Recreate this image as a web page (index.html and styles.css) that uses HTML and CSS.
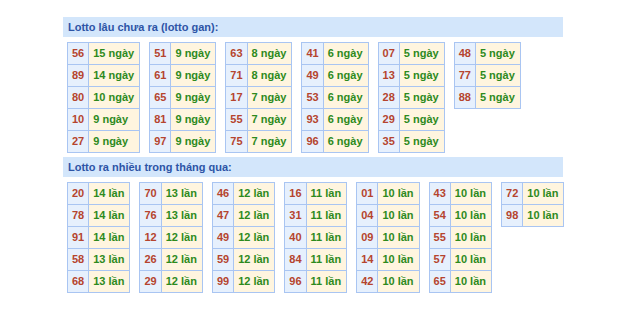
FILE: index.html
```html
<!DOCTYPE html>
<html lang="vi">
<head>
<meta charset="utf-8">
<link rel="stylesheet" href="styles.css">
</head>
<body>
<div class="wrap">
  <div class="title">Lotto lâu chưa ra (lotto gan):</div>
  <div class="group">
    <table class="lt"><tr><td class="n">56</td><td class="d">15 ngày</td></tr><tr><td class="n">89</td><td class="d">14 ngày</td></tr><tr><td class="n">80</td><td class="d">10 ngày</td></tr><tr><td class="n">10</td><td class="d">9 ngày</td></tr><tr><td class="n">27</td><td class="d">9 ngày</td></tr></table>
    <table class="lt"><tr><td class="n">51</td><td class="d">9 ngày</td></tr><tr><td class="n">61</td><td class="d">9 ngày</td></tr><tr><td class="n">65</td><td class="d">9 ngày</td></tr><tr><td class="n">81</td><td class="d">9 ngày</td></tr><tr><td class="n">97</td><td class="d">9 ngày</td></tr></table>
    <table class="lt"><tr><td class="n">63</td><td class="d">8 ngày</td></tr><tr><td class="n">71</td><td class="d">8 ngày</td></tr><tr><td class="n">17</td><td class="d">7 ngày</td></tr><tr><td class="n">55</td><td class="d">7 ngày</td></tr><tr><td class="n">75</td><td class="d">7 ngày</td></tr></table>
    <table class="lt"><tr><td class="n">41</td><td class="d">6 ngày</td></tr><tr><td class="n">49</td><td class="d">6 ngày</td></tr><tr><td class="n">53</td><td class="d">6 ngày</td></tr><tr><td class="n">93</td><td class="d">6 ngày</td></tr><tr><td class="n">96</td><td class="d">6 ngày</td></tr></table>
    <table class="lt"><tr><td class="n">07</td><td class="d">5 ngày</td></tr><tr><td class="n">13</td><td class="d">5 ngày</td></tr><tr><td class="n">28</td><td class="d">5 ngày</td></tr><tr><td class="n">29</td><td class="d">5 ngày</td></tr><tr><td class="n">35</td><td class="d">5 ngày</td></tr></table>
    <table class="lt"><tr><td class="n">48</td><td class="d">5 ngày</td></tr><tr><td class="n">77</td><td class="d">5 ngày</td></tr><tr><td class="n">88</td><td class="d">5 ngày</td></tr></table>
  </div>
  <div class="title">Lotto ra nhiều trong tháng qua:</div>
  <div class="group">
    <table class="lt"><tr><td class="n">20</td><td class="d">14 lần</td></tr><tr><td class="n">78</td><td class="d">14 lần</td></tr><tr><td class="n">91</td><td class="d">14 lần</td></tr><tr><td class="n">58</td><td class="d">13 lần</td></tr><tr><td class="n">68</td><td class="d">13 lần</td></tr></table>
    <table class="lt"><tr><td class="n">70</td><td class="d">13 lần</td></tr><tr><td class="n">76</td><td class="d">13 lần</td></tr><tr><td class="n">12</td><td class="d">12 lần</td></tr><tr><td class="n">26</td><td class="d">12 lần</td></tr><tr><td class="n">29</td><td class="d">12 lần</td></tr></table>
    <table class="lt"><tr><td class="n">46</td><td class="d">12 lần</td></tr><tr><td class="n">47</td><td class="d">12 lần</td></tr><tr><td class="n">49</td><td class="d">12 lần</td></tr><tr><td class="n">59</td><td class="d">12 lần</td></tr><tr><td class="n">99</td><td class="d">12 lần</td></tr></table>
    <table class="lt"><tr><td class="n">16</td><td class="d">11 lần</td></tr><tr><td class="n">31</td><td class="d">11 lần</td></tr><tr><td class="n">40</td><td class="d">11 lần</td></tr><tr><td class="n">84</td><td class="d">11 lần</td></tr><tr><td class="n">96</td><td class="d">11 lần</td></tr></table>
    <table class="lt"><tr><td class="n">01</td><td class="d">10 lần</td></tr><tr><td class="n">04</td><td class="d">10 lần</td></tr><tr><td class="n">09</td><td class="d">10 lần</td></tr><tr><td class="n">14</td><td class="d">10 lần</td></tr><tr><td class="n">42</td><td class="d">10 lần</td></tr></table>
    <table class="lt"><tr><td class="n">43</td><td class="d">10 lần</td></tr><tr><td class="n">54</td><td class="d">10 lần</td></tr><tr><td class="n">55</td><td class="d">10 lần</td></tr><tr><td class="n">57</td><td class="d">10 lần</td></tr><tr><td class="n">65</td><td class="d">10 lần</td></tr></table>
    <table class="lt"><tr><td class="n">72</td><td class="d">10 lần</td></tr><tr><td class="n">98</td><td class="d">10 lần</td></tr></table>
  </div>
</div>
</body>
</html>
```

FILE: styles.css
```css
html, body {
  margin: 0;
  padding: 0;
  background: #ffffff;
}
body {
  font-family: "Liberation Sans", Arial, sans-serif;
  font-size: 11px;
  font-weight: bold;
}
.wrap {
  width: 500px;
  margin: 0 0 0 63px;
  padding-top: 17px;
}
.title {
  height: 20px;
  line-height: 21px;
  background: #d3e6fb;
  color: #2d54a6;
  padding-left: 5px;
}
.group {
  display: flex;
  align-items: flex-start;
  gap: 9px;
  padding: 5px 0 4px 4px;
}
.lt {
  border-collapse: collapse;
}
.lt td {
  border: 1px solid #a9c5f2;
  padding: 0 4px;
  height: 21px;
  line-height: 21px;
  white-space: nowrap;
}
.lt td.n {
  background: #e6f0fd;
  color: #b5442e;
  text-align: center;
}
.lt td.d {
  background: #fff5df;
  color: #2d8a1d;
  text-align: left;
  padding: 0 5px 0 4px;
}
```
